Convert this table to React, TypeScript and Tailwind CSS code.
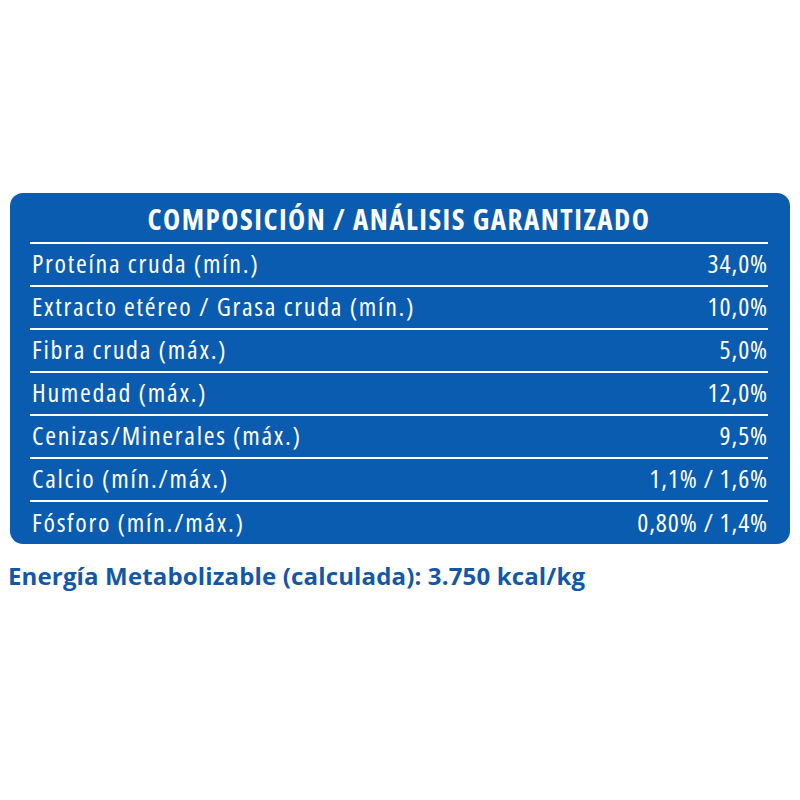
import React from "react";

const rows: [string, string][] = [
  ["Proteína cruda (mín.)", "34,0%"],
  ["Extracto etéreo / Grasa cruda (mín.)", "10,0%"],
  ["Fibra cruda (máx.)", "5,0%"],
  ["Humedad (máx.)", "12,0%"],
  ["Cenizas/Minerales (máx.)", "9,5%"],
  ["Calcio (mín./máx.)", "1,1% / 1,6%"],
  ["Fósforo (mín./máx.)", "0,80% / 1,4%"],
];

export default function App() {
  return (
    <div
      className="w-[800px] h-[800px] bg-white pt-[193px] pl-[10px] pr-[10px]"
      style={{ fontFamily: '"Open Sans", "DejaVu Sans Condensed", sans-serif' }}
    >
      <div className="bg-[#0a5cb0] rounded-[13px] pl-[20px] pr-[22px] text-white">
        <div className="h-[49px] flex items-center justify-center text-[29px] font-bold font-stretch-[75%] tracking-[1.5px] leading-none pt-[1px]">
          COMPOSICIÓN / ANÁLISIS GARANTIZADO
        </div>
        {rows.map(([k, v], i) => (
          <div
            key={i}
            className={`border-t-2 border-white flex items-center justify-between text-[26px] font-stretch-[75%] leading-none pl-[2px] pb-[3px] ${
              i === rows.length - 1 ? "h-[44px]" : "h-[43px]"
            }`}
          >
            <span className="tracking-[1.7px]">{k}</span>
            <span className="tracking-[0.9px]">{v}</span>
          </div>
        ))}
      </div>
      <div className="text-[#1358a8] text-[24px] font-bold tracking-[0.15px] leading-none mt-[20px] -ml-[2px]">
        Energía Metabolizable (calculada): 3.750 kcal/kg
      </div>
    </div>
  );
}
